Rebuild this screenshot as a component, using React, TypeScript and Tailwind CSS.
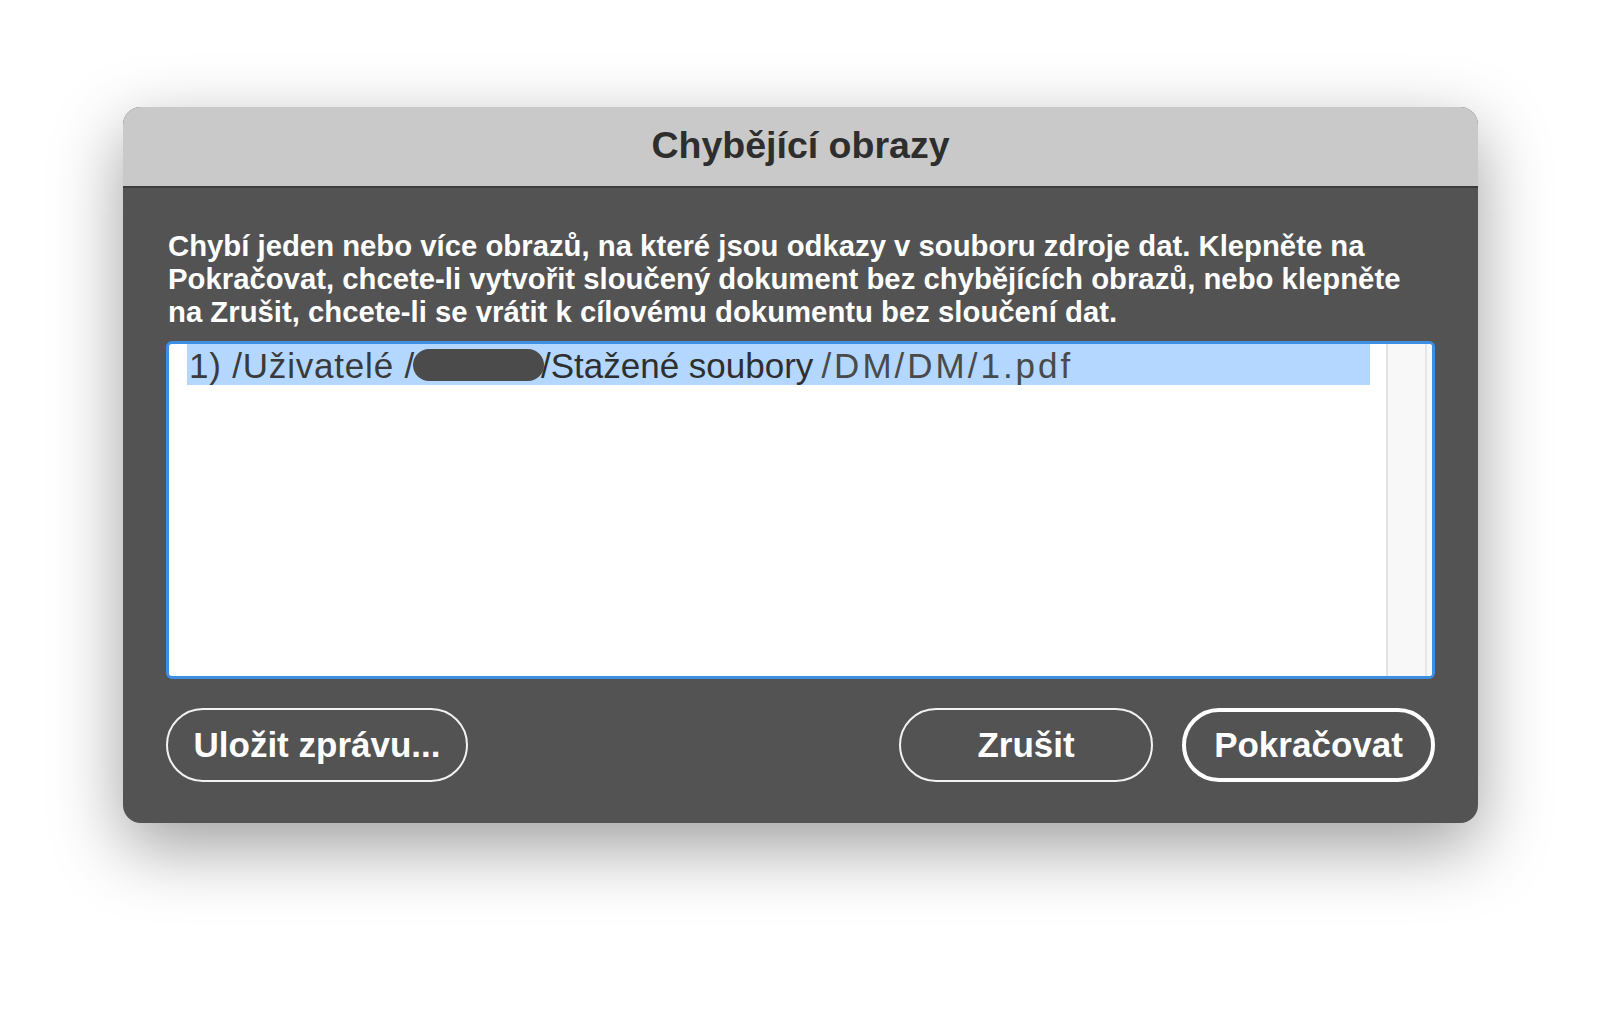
export default function App() {
  const font = { fontFamily: '"Liberation Sans", Arial, sans-serif' }
  return (
    <div className="w-[1600px] h-[1033px] bg-white pt-[107px] pl-[123px]" style={font}>
      <div className="w-[1355px] h-[716px] rounded-[18px] overflow-hidden bg-[#535353] shadow-[0_24px_70px_rgba(0,0,0,0.38)] flex flex-col">
        {/* Title bar */}
        <div className="h-[81px] bg-[#c9c9c9] border-b-2 border-[#3c3c3c] flex items-center justify-center">
          <h1 className="text-[37.5px] font-bold text-[#2e2e2e] mt-[-2px]">Chybějící obrazy</h1>
        </div>

        {/* Body */}
        <div className="flex-1 px-[43px] pt-[41px] flex flex-col">
          <p className="ml-[2px] text-[29.3px] leading-[33px] font-bold text-white whitespace-nowrap">
            Chybí jeden nebo více obrazů, na které jsou odkazy v souboru zdroje dat. Klepněte na
            <br />
            Pokračovat, chcete-li vytvořit sloučený dokument bez chybějících obrazů, nebo klepněte
            <br />
            na Zrušit, chcete-li se vrátit k cílovému dokumentu bez sloučení dat.
          </p>

          {/* List box */}
          <div className="mt-[13px] h-[338px] bg-white border-[3px] border-[#3d8fe3] rounded-[6px] flex overflow-hidden">
            <div className="flex-1 pl-[18px]">
              <div className="h-[41px] w-[1183px] bg-[#b3d7ff] flex items-center pt-[4px] text-[35px] whitespace-nowrap">
                <span className="ml-[2px] text-[#3a3a3a] tracking-[0.8px]">1) /Uživatelé /</span>
                <span className="inline-block w-[131px] h-[32px] rounded-full bg-[#4b4b4b] ml-[-2px] mr-[-3px] mt-[-4px]" />
                <span className="text-[#2f2f2f]">/Stažené soubory </span>
                <span className="ml-[8px] text-[#4a4a4a] tracking-[3px]">/DM/DM/1.pdf</span>
              </div>
            </div>
            <div className="w-[46px] bg-[#f8f8f8] border-l-2 border-[#e2e2e2] flex justify-end">
              <div className="w-[2px] h-full bg-[#e6e6e6] mr-[5px]" />
            </div>
          </div>

          {/* Buttons */}
          <div className="mt-[29px] flex items-center">
            <button className="w-[302px] h-[74px] rounded-full border-2 border-[#f2f2f2] text-white font-bold text-[35px]">
              Uložit zprávu...
            </button>
            <div className="flex-1" />
            <button className="w-[254px] h-[74px] rounded-full border-2 border-[#f2f2f2] text-white font-bold text-[35px]">
              Zrušit
            </button>
            <button className="ml-[29px] w-[253px] h-[74px] rounded-full border-4 border-white text-white font-bold text-[35px]">
              Pokračovat
            </button>
          </div>
        </div>
      </div>
    </div>
  )
}
